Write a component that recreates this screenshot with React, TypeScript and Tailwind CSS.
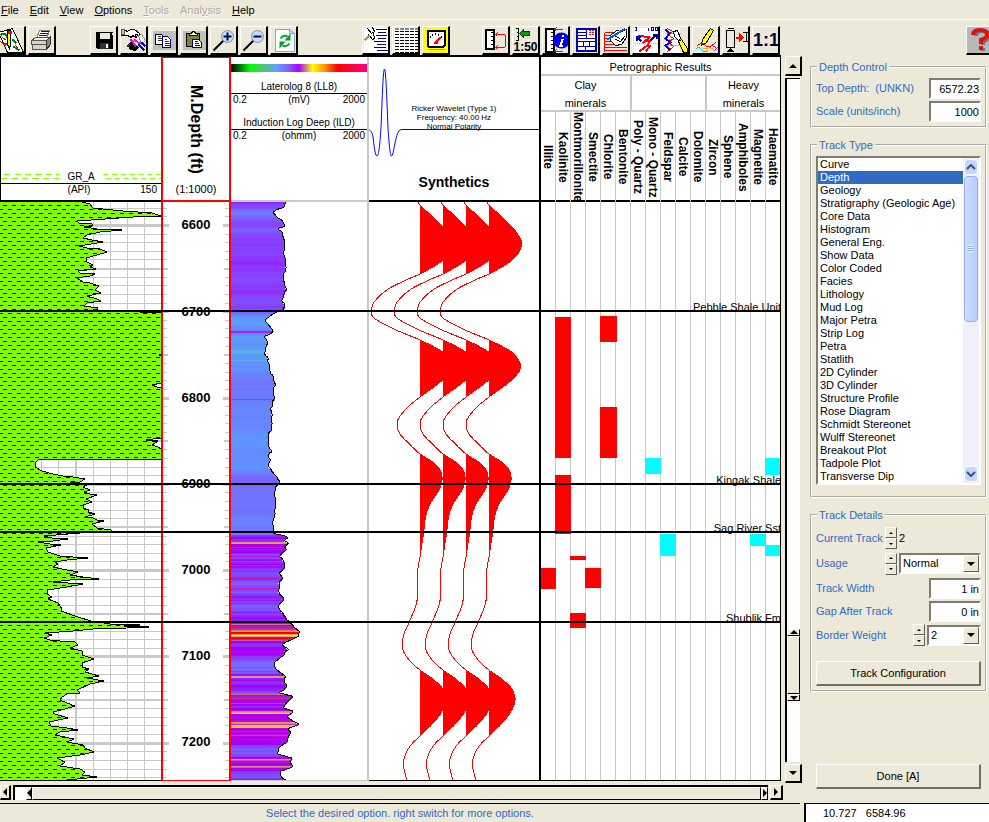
import React from "react";

type Pt = [number, number];

/* ---------- depth axis ---------- */
const TOP = 202;
const SPAN = 579;
const depthToY = (d: number) => 225.4 + (d - 6600) * 0.863;
const toPct = (y: number) => `${((y - TOP) / SPAN) * 100}%`;

const depthLabels = [6600, 6700, 6800, 6900, 7000, 7100, 7200];
const ticks: number[] = [];
for (let d = 6580; d <= 7240; d += 10) ticks.push(d);
const tickWeight = (d: number) => (d % 100 === 0 ? 3 : d % 50 === 0 ? 2 : 1);

const formations = [
  { name: "Pebble Shale Unit", y: 310 },
  { name: "Kingak Shale", y: 483 },
  { name: "Sag River Sst", y: 531 },
  { name: "Shublik Fm", y: 621 },
];

/* ---------- gamma ray ---------- */
const gamma: Pt[] = [
  [82, 202], [90, 204], [93, 208], [123, 211], [152, 213], [161, 216], [133, 217], [105, 219], [77, 221], [79, 223], [92, 224], [92, 226],
  [84, 227], [97, 229], [122, 230], [100, 232], [87, 235], [83, 238], [92, 240], [103, 242], [91, 244], [79, 246], [87, 248], [100, 249],
  [107, 252], [97, 255], [86, 258], [87, 262], [93, 265], [90, 267], [96, 269], [78, 271], [80, 273], [95, 274], [90, 276], [77, 278],
  [83, 282], [90, 283], [99, 286], [95, 290], [101, 293], [87, 296], [97, 299], [101, 301], [87, 303], [84, 306], [98, 308], [97, 310],
  [140, 312], [161, 313], [161, 354], [159, 355], [161, 356], [161, 383], [152, 385], [157, 387], [161, 388], [161, 438], [146, 440],
  [158, 441], [152, 445], [158, 447], [161, 449], [161, 459], [39, 459], [35, 463], [35, 467], [42, 471], [53, 474], [63, 476],
  [73, 477], [85, 479], [80, 482], [70, 483], [87, 485], [83, 487], [90, 490], [84, 492], [90, 494], [97, 495], [86, 499], [92, 502],
  [83, 505], [83, 508], [89, 510], [88, 512], [95, 514], [85, 517], [93, 518], [97, 520], [104, 521], [92, 524], [97, 528], [111, 530],
  [111, 531], [80, 533], [44, 536], [52, 538], [68, 539], [53, 541], [38, 542], [50, 544], [61, 545], [46, 548], [48, 552], [60, 556],
  [73, 557], [88, 558], [67, 560], [55, 562], [58, 564], [53, 567], [62, 569], [78, 572], [70, 575], [83, 577], [99, 579], [70, 580],
  [53, 582], [83, 584], [67, 587], [47, 590], [47, 594], [52, 597], [48, 599], [58, 603], [60, 606], [62, 609], [61, 611], [78, 617],
  [91, 621], [110, 624], [140, 625], [124, 626], [149, 627], [127, 628], [93, 629], [73, 631], [45, 633], [52, 635], [44, 638], [50, 640],
  [60, 641], [75, 642], [78, 645], [70, 648], [82, 651], [82, 655], [94, 659], [82, 663], [82, 667], [89, 669], [85, 672], [99, 676],
  [87, 678], [104, 681], [90, 684], [77, 690], [80, 693], [67, 694], [62, 697], [60, 700], [67, 703], [75, 706], [65, 709], [53, 712],
  [55, 714], [68, 718], [49, 722], [51, 726], [67, 728], [78, 730], [60, 732], [55, 735], [74, 739], [67, 742], [83, 745], [85, 748],
  [94, 752], [80, 755], [57, 758], [65, 762], [60, 766], [80, 769], [85, 772], [82, 775], [97, 777], [67, 780], [67, 781],
];
const gammaLine = gamma.map((p) => p.join(",")).join(" ");

/* ---------- resistivity ---------- */
const resist: Pt[] = [
  [286, 202], [284, 208], [277, 210], [273, 213], [278, 218], [283, 221], [285, 227], [278, 229], [282, 233], [284, 238], [285, 248],
  [284, 254], [286, 262], [285, 271], [283, 278], [284, 285], [286, 291], [282, 301], [285, 307], [284, 310], [278, 312], [270, 316],
  [265, 321], [270, 328], [274, 332], [265, 337], [268, 342], [266, 348], [264, 353], [268, 360], [269, 368], [273, 377], [275, 383],
  [274, 389], [273, 395], [275, 400], [273, 402], [271, 410], [272, 420], [271, 430], [268, 437], [268, 445], [271, 452], [269, 456],
  [270, 460], [268, 467], [272, 472], [277, 477], [279, 483], [275, 490], [275, 513], [272, 523], [274, 530], [273, 534], [283, 536],
  [289, 538], [283, 541], [289, 544], [284, 547], [286, 550], [280, 557], [284, 563], [285, 568], [280, 573], [283, 580], [278, 583],
  [280, 588], [278, 592], [284, 599], [284, 600], [278, 607], [283, 615], [288, 621], [292, 626], [300, 632], [298, 637], [287, 642],
  [282, 645], [288, 650], [282, 657], [274, 663], [276, 670], [286, 677], [284, 682], [287, 687], [283, 691], [278, 693], [293, 697],
  [287, 703], [283, 708], [294, 712], [287, 717], [292, 721], [299, 725], [288, 729], [291, 733], [287, 740], [286, 743], [279, 748],
  [277, 754], [286, 757], [293, 759], [289, 763], [293, 767], [280, 772], [282, 778], [286, 781],
];

const interpolate = (pts: Pt[], y: number) => {
  for (let i = 1; i < pts.length; i++) {
    if (y <= pts[i][1]) {
      const [x0, y0] = pts[i - 1];
      const [x1, y1] = pts[i];
      return y1 === y0 ? x1 : x0 + ((x1 - x0) * (y - y0)) / (y1 - y0);
    }
  }
  return pts[pts.length - 1][0];
};

const ramp: [number, number, number, number][] = [
  [262, 88, 170, 235], [267, 92, 152, 255], [272, 104, 132, 255], [276, 116, 110, 255], [281, 124, 88, 255],
  [285, 138, 60, 255], [289, 160, 0, 255], [294, 184, 0, 224], [300, 190, 40, 190],
];
const rampColour = (v: number) => {
  const x = Math.max(262, Math.min(300, v));
  for (let i = 1; i < ramp.length; i++) {
    if (x <= ramp[i][0]) {
      const a = ramp[i - 1];
      const b = ramp[i];
      const t = (x - a[0]) / (b[0] - a[0]);
      const mix = (k: 1 | 2 | 3) => Math.round(a[k] + (b[k] - a[k]) * t);
      return `rgb(${mix(1)},${mix(2)},${mix(3)})`;
    }
  }
  return "rgb(160,0,255)";
};
const jitter = (y: number) => {
  const s = Math.sin(y * 12.9898) * 43758.5453;
  return (s - Math.floor(s)) * 2 - 1;
};
const stripes: Record<number, string> = {
  331: "#a020ff", 332: "#a020ff", 350: "#5ab0e8", 351: "#5ab0e8", 352: "#5ab0e8", 360: "#5ab0e8", 399: "#9040ff",
  542: "#d8a060", 543: "#d8a060", 546: "#b000d0", 556: "#c010c0", 563: "#c010c0", 578: "#c020b0", 588: "#b820c0",
  624: "#d070a0", 630: "#e08040", 631: "#e0a040", 632: "#ff0000", 633: "#ff0000", 634: "#e8a020", 635: "#ffff20", 636: "#e0a0a0",
  637: "#ff0000", 638: "#ff0000", 640: "#c050b0", 676: "#d8a070", 677: "#d09090", 683: "#c020b0", 694: "#d07090", 698: "#b838b8",
  703: "#c040c0", 711: "#d08080", 712: "#e8a050", 713: "#ffe010", 722: "#d89060", 723: "#e0a040", 725: "#ffe000", 726: "#ffb000",
  727: "#ffe800", 731: "#b830b0", 735: "#c040a0", 759: "#d89090", 760: "#c050c0", 766: "#d09080", 767: "#c060a0", 773: "#b020d0",
  780: "#e8c030",
};
const resistRows = Array.from({ length: SPAN }, (_, i) => {
  const y = TOP + i;
  const x = interpolate(resist, y + 0.5);
  const lower = y > 534;
  const fill = stripes[y] ?? rampColour(x + (lower ? 3 + jitter(y) * 3 : jitter(Math.floor(y / 2)) * 0.8));
  return { y, x, fill };
});

/* ---------- synthetic seismic ---------- */
const wiggle: Pt[] = [
  [-2, 202], [0, 205], [22, 226], [31, 238], [32.5, 244], [29.5, 253], [19, 263], [0, 274], [-11.7, 279], [-31.7, 289], [-45, 301],
  [-48.7, 310], [-47, 317], [-38, 323], [-21.7, 331], [0, 340], [22.7, 352], [30, 361], [31.5, 366], [29, 373], [19, 383], [0, 397],
  [-13, 408], [-21.7, 419], [-22.7, 426], [-20, 434], [-11.7, 443], [0, 454], [12.7, 462], [19.5, 469], [22, 478], [20, 488],
  [15, 496], [9.5, 505], [5.5, 517], [3.5, 533], [1, 550], [0, 557], [-2.5, 572], [-2.7, 597], [-4, 605], [-10.7, 622], [-15.7, 633],
  [-17.7, 645], [-15.7, 653], [-9, 662], [0, 670], [14, 680], [22.7, 689], [26, 699], [22.7, 710], [14, 722], [0, 736], [-9, 745],
  [-14.7, 755], [-16.7, 765], [-15, 773], [-13, 781],
];
const spline = (y: number) => {
  let i = 1;
  while (i < wiggle.length - 1 && y > wiggle[i][1]) i++;
  const p0 = wiggle[Math.max(0, i - 2)];
  const p1 = wiggle[i - 1];
  const p2 = wiggle[i];
  const p3 = wiggle[Math.min(wiggle.length - 1, i + 1)];
  const h = p2[1] - p1[1];
  const t = (y - p1[1]) / h;
  const m1 = ((p2[0] - p0[0]) / (p2[1] - p0[1])) * h;
  const m2 = ((p3[0] - p1[0]) / (p3[1] - p1[1])) * h;
  return (
    (2 * t ** 3 - 3 * t ** 2 + 1) * p1[0] + (t ** 3 - 2 * t ** 2 + t) * m1 + (-2 * t ** 3 + 3 * t ** 2) * p2[0] + (t ** 3 - t ** 2) * m2
  );
};
const wiggleSamples = Array.from({ length: SPAN + 1 }, (_, i) => ({ y: TOP + i, d: spline(TOP + i) }));
const traces = [420, 443, 466, 489].map((base) => ({
  base,
  line: wiggleSamples.map((s) => `${(base + s.d).toFixed(1)},${s.y}`).join(" "),
  fill: `${base},${TOP} ` + wiggleSamples.map((s) => `${(base + Math.max(0, s.d)).toFixed(1)},${s.y}`).join(" ") + ` ${base},${TOP + SPAN}`,
}));

/* ---------- petrography ---------- */
const minerals = [
  "Illite", "Kaolinite", "Montmorillonite", "Smectite", "Chlorite", "Bentonite", "Poly - Quartz", "Mono - Quartz",
  "Feldspar", "Calcite", "Dolomite", "Zircon", "Sphene", "Amphiboles", "Magnetite", "Haematite",
];
const mineralBars = [
  { col: 1, from: 317, to: 458, fill: "#ff0000" },
  { col: 1, from: 475, to: 534, fill: "#ff0000" },
  { col: 4, from: 316, to: 342, fill: "#ff0000" },
  { col: 4, from: 407, to: 458, fill: "#ff0000" },
  { col: 2, from: 556, to: 560, fill: "#ff0000" },
  { col: 2, from: 613, to: 628, fill: "#ff0000" },
  { col: 0, from: 568, to: 589, fill: "#ff0000" },
  { col: 3, from: 568, to: 588, fill: "#ff0000" },
  { col: 7, from: 458, to: 474, fill: "#00ffff" },
  { col: 15, from: 458, to: 475, fill: "#00ffff" },
  { col: 8, from: 534, to: 556, fill: "#00ffff" },
  { col: 14, from: 534, to: 546, fill: "#00ffff" },
  { col: 15, from: 545, to: 556, fill: "#00ffff" },
];

const trackTypes = [
  "Curve", "Depth", "Geology", "Stratigraphy (Geologic Age)", "Core Data", "Histogram", "General Eng.", "Show Data", "Color Coded",
  "Facies", "Lithology", "Mud Log", "Major Petra", "Strip Log", "Petra", "Statlith", "2D Cylinder", "3D Cylinder",
  "Structure Profile", "Rose Diagram", "Schmidt Stereonet", "Wulff Stereonet", "Breakout Plot", "Tadpole Plot", "Transverse Dip",
];

/* ---------- toolbar ---------- */
const icons: Record<string, React.ReactNode> = {
  "Map editor": (
    <>
      <path d="M-1 5 L13 1 L24 25 L8 25Z" fill="#fff" stroke="#000" />
      <path d="M1 8 q4 -4 6 0 t3 5 M4 17 q4 -2 6 2 M14 19 l6 4 M13 12 l4 4" fill="none" stroke="#008000" strokeWidth="2" />
      <path d="M0 13 l7 6 M3 10 l4 3 M16 18 l3 3" stroke="#f00" fill="none" />
      <path d="M8 3 h3 v14 l-1 4 l-2 -4z" fill="#ff0" stroke="#000" />
      <path d="M8 3 h4 v3 h-4z" fill="#f00" />
    </>
  ),
  Print: (
    <>
      <path d="M7 11 L10 3 L20 3 L17 11Z" fill="#fff" stroke="#888" />
      <path d="M11 4 h8 M10 6 h8 M9 8 h8" stroke="#00f" />
      <path d="M2 13 l4 -3 h14 l-3 3z" fill="#f4f2e8" stroke="#555" />
      <path d="M2 13 h15 v4 H2z M3 17 h14 v5 H3z" fill="#d8d4c4" stroke="#555" />
      <path d="M17 13 l4 -4 v8 l-4 5z" fill="#888" stroke="#333" />
    </>
  ),
  Save: (
    <>
      <path d="M4 4 h17 v17 H5 l-1 -1z" fill="#000" />
      <path d="M8 5 h10 v6 H8z" fill="#ece9d8" />
      <path d="M8 15 h9 v6 H8z" fill="#333" />
      <path d="M14 16 h2 v4 h-2z M20 5 h1 v2 h-1z" fill="#fff" />
    </>
  ),
  Pick: (
    <>
      <path d="M0 3 h4 l2 1 l3 -2 h4 l5 4 v2 l-4 -1 l1 3 l-4 -2 l-1 2 l-4 -2 H0z" fill="#fff" stroke="#000" />
      <path d="M0 2 h3 v5 H0z" fill="#c0c0c0" stroke="#555" />
      <path d="M6 18 l4 -5 l7 7 l-3 4 l-6 -2z" fill="#000" />
      <path d="M9 12 l6 7 M13 12 l6 5" stroke="#f0c" strokeWidth="2" />
      <path d="M17 8 l3 -1 l4 6 l-4 4z" fill="#fff" stroke="#888" />
      <path d="M17 17 l6 6 M20 15 l4 4" stroke="#00f" strokeWidth="2" />
      <path d="M5 20 l3 -3" stroke="#f00" />
    </>
  ),
  Copy: (
    <>
      <path d="M1 3 h23 v19 H1z" fill="#c0c0c0" />
      <path d="M4 7 h6 l3 3 v7 H4z" fill="#fff" stroke="#000" />
      <path d="M11 9 h5 l3 3 v8 h-8z" fill="#fff" stroke="#000080" />
      <path d="M6 9 h3 M6 11 h4 M6 13 h4 M13 12 h2 M13 14 h4 M13 16 h5 M13 18 h5" stroke="#333" />
    </>
  ),
  Paste: (
    <>
      <path d="M1 3 h23 v19 H1z" fill="#c0c0c0" />
      <path d="M5 6 h13 v13 H5z" fill="#808040" stroke="#000" />
      <path d="M8 8 v-2 h2 l1 -2 h2 l1 2 h2 v2z" fill="#ffff80" stroke="#000" />
      <path d="M11 12 h6 l3 3 v5 h-9z" fill="#fff" stroke="#000080" />
      <path d="M13 14 h3 M13 16 h4 M13 18 h5" stroke="#000080" />
    </>
  ),
  "Zoom in": (
    <g shapeRendering="auto">
      <path d="M2 23 L12 13" stroke="#000" strokeWidth="2" />
      <circle cx="16" cy="9" r="6" fill="#c4dcf8" stroke="#8090a8" />
      <path d="M12 9 h8 M16 5 v8" stroke="#001040" strokeWidth="2" />
    </g>
  ),
  "Zoom out": (
    <g shapeRendering="auto">
      <path d="M2 23 L12 13" stroke="#000" strokeWidth="2" />
      <circle cx="16" cy="9" r="6" fill="#c4dcf8" stroke="#8090a8" />
      <path d="M12 9 h8" stroke="#001040" strokeWidth="2" />
    </g>
  ),
  Refresh: (
    <g shapeRendering="auto">
      <path d="M4 2 h14 l5 4 v18 H4z" fill="#fff" stroke="#8aa4d0" />
      <path d="M18 2 v4 h5z" fill="#c0d8ff" stroke="#8aa4d0" />
      <path d="M9 11 q3 -4 7 -2" fill="none" stroke="#00a030" strokeWidth="2" />
      <path d="M19 6 v7 h-6z" fill="#00a030" />
      <path d="M18 16 q-3 4 -7 2" fill="none" stroke="#00a030" strokeWidth="2" />
      <path d="M8 21 v-7 h6z" fill="#00a030" />
    </g>
  ),
  "Edit list": (
    <>
      <path d="M0 0 h26 v26 H0z" fill="#fff" />
      <path d="M12 2 h11 M14 5 h8 M12 8 h11 M14 11 h8 M10 14 h12 M13 17 h9 M10 20 h12 M13 23 h11" stroke="#000080" />
      <path d="M4 1 l4 5 l3 -2 l-2 -4 M5 7 l4 5 l2 -1 l-1 -5" fill="#fff" stroke="#000" />
      <path d="M1 13 l5 -5" stroke="#a0a000" strokeWidth="2" />
    </>
  ),
  Table: (
    <>
      <path d="M0 0 h26 v26 H0z" fill="#fff" />
      <path d="M1 1 h24" stroke="#888" strokeWidth="2" strokeDasharray="4 1" />
      <path d="M1 4 h24 M1 7 h24 M1 10 h24 M1 13 h24 M1 16 h24 M1 19 h24 M1 22 h24 M1 25 h24" stroke="#000" strokeDasharray="4 1" />
    </>
  ),
  Gauge: (
    <>
      <path d="M-1 -1 h27 v27 H-1z" fill="#ff0" />
      <path d="M4 3 h17 v15 l-1 1 H5 l-1 -1z" fill="#fff" stroke="#000" strokeWidth="2" />
      <path d="M7 10 v-2 M9 8 v-2 M12 7 v-2 M15 8 v-2 M18 10 v-2" stroke="#000" />
      <path d="M11 16 l6 -6" stroke="#f00" strokeWidth="2" />
      <path d="M10 14 h4 v2 h-4z" fill="#f00" />
      <path d="M5 22 h16" stroke="#a0a000" />
    </>
  ),
  "Depth frame": (
    <>
      <path d="M2 2 h8 v19 H2z" fill="#fff" stroke="#000" strokeWidth="2" />
      <path d="M7 5 h2 M7 9 h2 M7 13 h2 M7 17 h2" stroke="#000" />
      <path d="M12 7 h9 l1 1 v11 l-1 1 H12 M14 5 l-2 2 l2 2 M14 18 l-2 2 l2 2" fill="none" stroke="#f00" />
    </>
  ),
  Scale: (
    <>
      <path d="M2 1 h3 v12 H2 M3 5 h2 M3 9 h2" fill="none" stroke="#000" />
      <path d="M6 6 l4 -4 v2 h6 v4 h-6 v2z" fill="#00a000" stroke="#004000" />
    </>
  ),
  "Track information": (
    <>
      <path d="M2 1 h8 v23 H2z" fill="#fff" stroke="#000" strokeWidth="2" />
      <path d="M7 5 h2 M7 9 h2 M7 13 h2 M7 17 h2 M7 21 h2" stroke="#000" />
      <path d="M11 2 h8 M13 0 l-2 2 l2 2 M11 24 h8 M13 22 l-2 2 l2 2" stroke="#f00" fill="none" />
      <circle cx="18" cy="13" r="8" fill="#0000f0" shapeRendering="auto" />
      <path d="M17 12 h2 l-2 6 h2 M19 7 v2" stroke="#fff" strokeWidth="2" fill="none" />
    </>
  ),
  Layout: (
    <>
      <path d="M3 1 h19 v22 H3z" fill="#fff" stroke="#0000c0" strokeWidth="2" />
      <path d="M3 5 h10 M3 8 h10 M3 11 h19 M3 14 h19 M3 19 h19 M13 1 v10 M10 14 v5 M16 14 v5 M12 19 v4" stroke="#0000c0" />
      <path d="M15 3 h6 M15 5 h6 M15 7 h6" stroke="#f00" strokeDasharray="2 1" />
    </>
  ),
  "Draw lines": (
    <>
      <path d="M1 5 h8 M1 8 h7 M1 11 h8 M1 14 h8 M1 17 h14 M1 20 h22 M1 23 h22 M1 5 v19" stroke="#f00" />
      <path d="M7 8 l6 -5 l5 1 l5 -2 v8 l-5 7 l-6 1 l-5 -5z" fill="#fff" stroke="#000" />
      <path d="M4 12 l18 -11" stroke="#0060d0" strokeWidth="2" />
      <path d="M12 9 l5 2 M12 12 l5 2 l4 -5" stroke="#000" fill="none" />
    </>
  ),
  "Edit curve": (
    <>
      <path d="M0 0 h26 v26 H0z" fill="#fff" />
      <path d="M1 0 h2 v3 h-2 M15 0 v3 M18 0 h2 v3 h-2z M22 0 h2 v3 h-2z" fill="none" stroke="#00f" />
      <path d="M5 8 l11 2 l-5 4 l6 -1 l-3 5 l-8 6 M17 18 l-5 6" stroke="#f00" fill="none" strokeWidth="2" />
      <path d="M8 14 l-5 -5 M3 13 v-4 h4 M17 13 l6 -6 M19 7 h4 v4" stroke="#0000c0" fill="none" strokeWidth="2" />
      <path d="M1 16 h24" stroke="#aaa" strokeDasharray="1 1" />
    </>
  ),
  "Paint curve": (
    <>
      <path d="M1 0 h15 v26 H1z" fill="#fff" />
      <path d="M1 6 h16 M1 12 h16 M1 18 h16" stroke="#bbb" />
      <path d="M4 1 l5 3 l-5 3 l6 4 l-5 4 l5 4 l-6 5" stroke="#f00" fill="none" />
      <path d="M2 2 l4 4 l-4 5 l5 4 l-5 3 l5 5" stroke="#00f" strokeWidth="2" fill="none" />
      <path d="M10 4 l4 -1 l3 8 l-2 2 l-4 -4z" fill="#fff" stroke="#000" />
      <path d="M15 14 l3 -2 l6 9 v4 h-4z" fill="#ff0" stroke="#000" />
    </>
  ),
  Highlight: (
    <>
      <path d="M17 1 l3 2 l-7 12 l-5 3 l1 -6z" fill="#ff0" stroke="#000" />
      <path d="M4 18 q5 -4 8 0 t10 -3" stroke="#f00" fill="none" />
      <path d="M2 22 q3 -4 6 0 t6 1" stroke="#00cccc" fill="none" />
      <path d="M9 21 h5 M16 20 l4 2" stroke="#fa0" />
      <path d="M18 18 l5 2 M20 24 l4 -4" stroke="#c000ff" />
    </>
  ),
  "Shift track": (
    <>
      <path d="M3 3 h8 v17 H3z" fill="#ece9d8" stroke="#000" />
      <path d="M4 1 h6 M7 21 l-3 3 h6z" stroke="#000" />
      <path d="M12 10 h4 M16 7 l3 3 l-3 3z" stroke="#f00" fill="#f00" strokeWidth="2" />
      <path d="M19 5 h6 M19 14 h6 M23 5 v9" stroke="#000" />
    </>
  ),
};

function ToolButton({ label, children }: { label: string; children?: React.ReactNode }) {
  return (
    <button
      type="button"
      aria-label={label}
      className="relative h-[29px] w-7 shrink-0 overflow-hidden border-t border-r-2 border-b-2 border-l border-t-white border-r-black border-b-black border-l-white bg-[#ece9d8]"
    >
      {icons[label] && (
        <svg viewBox="-0.5 -0.5 25 26" className="block size-full" shapeRendering="crispEdges" aria-hidden="true">
          {icons[label]}
        </svg>
      )}
      {children}
    </button>
  );
}

function Toolbar() {
  return (
    <div role="toolbar" aria-label="Main tools" className="flex h-[35px] shrink-0 items-end gap-[2px] overflow-hidden">
      <div className="-ml-0.5 flex gap-[2px]">
        <ToolButton label="Map editor" />
        <ToolButton label="Print" />
      </div>
      <div className="ml-8 flex gap-[2px]">
        {["Save", "Pick", "Copy", "Paste", "Zoom in", "Zoom out", "Refresh"].map((n) => (
          <ToolButton key={n} label={n} />
        ))}
      </div>
      <div className="ml-[62px] flex gap-[2px]">
        {["Edit list", "Table", "Gauge"].map((n) => (
          <ToolButton key={n} label={n} />
        ))}
      </div>
      <div className="ml-[30px] flex gap-[2px]">
        <ToolButton label="Depth frame" />
        <ToolButton label="Scale">
          <span className="absolute inset-x-0 bottom-0 text-center text-[12px] leading-3 font-bold">1:50</span>
        </ToolButton>
        {["Track information", "Layout", "Draw lines", "Edit curve", "Paint curve", "Highlight", "Shift track"].map((n) => (
          <ToolButton key={n} label={n} />
        ))}
        <ToolButton label="Actual size">
          <span className="block text-center text-[18px] leading-6 font-bold text-[#000040]">1:1</span>
        </ToolButton>
      </div>
      <div className="-mr-[5px] ml-auto flex">
        <button
          type="button"
          aria-label="Help"
          className="h-[29px] w-7 border-t border-r-2 border-b-2 border-l border-t-white border-r-black border-b-black border-l-white bg-[#b8b8b8]"
        >
          <svg viewBox="0 0 25 26" className="block size-full" aria-hidden="true">
            <path d="M9 9 Q9 4 15 4 Q22 4 22 9 Q22 12 16 15 V18 M16 21 V24" fill="none" stroke="#707888" strokeWidth="4" />
            <path d="M6 8 Q6 3 13 3 Q20 3 20 8 Q20 11 14 13 V17 M14 19 V23" fill="none" stroke="#e01010" strokeWidth="4" />
          </svg>
        </button>
      </div>
    </div>
  );
}

function MenuBar() {
  const items = [
    { pre: "", key: "F", post: "ile" },
    { pre: "", key: "E", post: "dit" },
    { pre: "", key: "V", post: "iew" },
    { pre: "", key: "O", post: "ptions" },
    { pre: "", key: "T", post: "ools", off: true },
    { pre: "Anal", key: "y", post: "sis", off: true },
    { pre: "", key: "H", post: "elp" },
  ];
  return (
    <nav className="flex h-5 shrink-0 items-center gap-[11px] border-b border-white pl-px">
      {items.map((m) => (
        <button
          key={m.key}
          type="button"
          disabled={m.off}
          className="text-[11px] leading-4 disabled:text-[#aca899] disabled:[text-shadow:1px_1px_0_#fff]"
        >
          {m.pre}
          <u>{m.key}</u>
          {m.post}
        </button>
      ))}
    </nav>
  );
}

/* ---------- tracks ---------- */
const header = "flex h-[145px] shrink-0 flex-col border-b-2";
const chart = "absolute inset-0 block size-full";

function GammaTrack() {
  return (
    <section className="flex min-w-0 flex-col border-r-2 border-[#ff0000]">
      <div className={`${header} justify-end border-l border-black`}>
        <div className="flex items-center gap-2">
          <svg viewBox="0 0 56 6" className="h-[6px] flex-1" preserveAspectRatio="none" shapeRendering="crispEdges" aria-hidden="true">
            <path d="M3 0.5 H56 M0 4.5 H56" stroke="#80ff00" strokeDasharray="6 4" />
          </svg>
          <span className="text-[10px] leading-3">GR_A</span>
          <svg viewBox="0 0 66 6" className="h-[6px] flex-1" preserveAspectRatio="none" shapeRendering="crispEdges" aria-hidden="true">
            <path d="M0 0.5 H66 M3 4.5 H66" stroke="#80ff00" strokeDasharray="6 4" />
          </svg>
        </div>
        <div className="mb-1 grid grid-cols-[1fr_auto_1fr] border-t border-black pr-1 text-[10px] leading-3">
          <span />
          <span>(API)</span>
          <span className="text-right">150</span>
        </div>
      </div>
      <div className="relative flex-1 border-b border-black">
        <svg viewBox="0 202 161 578" className={chart} preserveAspectRatio="none" shapeRendering="crispEdges" aria-label="Gamma ray curve">
          <defs>
            <pattern id="shale" x="0" y="205" width="9" height="8" patternUnits="userSpaceOnUse">
              <rect width="9" height="8" fill="#80ff00" />
              <rect x="3" y="0" width="4" height="1" fill="#000" />
              <rect x="0" y="4" width="3" height="1" fill="#000" />
              <rect x="8" y="4" width="1" height="1" fill="#000" />
            </pattern>
          </defs>
          {[24, 41, 58, 93, 110, 127, 144].map((x) => (
            <rect key={x} x={x} y="202" width="1" height="579" fill="#c8c8c8" />
          ))}
          <rect x="75" y="202" width="2" height="579" fill="#c8c8c8" />
          {ticks.map((d) => (
            <rect key={d} x="0" width="161" y={Math.round(depthToY(d) - tickWeight(d) / 2)} height={tickWeight(d)} fill="#c8c8c8" />
          ))}
          <polygon points={`0,202 ${gammaLine} 0,781`} fill="url(#shale)" />
          <polyline points={gammaLine} fill="none" stroke="#000" />
        </svg>
      </div>
    </section>
  );
}

function DepthTrack() {
  return (
    <section className="flex min-w-0 flex-col border-r-2 border-[#ff0000]">
      <div className={`${header} items-center justify-between border-t border-[#ff0000] pt-[27px] pb-[5px]`}>
        <span className="text-[16px] leading-5 font-bold whitespace-nowrap [writing-mode:vertical-rl]">M.Depth (ft)</span>
        <span className="text-[11px] leading-3">(1:1000)</span>
      </div>
      <div className="relative flex-1 border-b border-[#ff0000]">
        <svg viewBox="163 202 66 578" className={chart} preserveAspectRatio="none" shapeRendering="crispEdges" aria-hidden="true">
          {ticks.map((d) => {
            const w = tickWeight(d);
            const len = w + 3;
            const y = Math.round(depthToY(d) - w / 2);
            return (
              <g key={d} fill="#c8c8c8">
                <rect x="163" y={y} width={len} height={w} />
                <rect x={229 - len} y={y} width={len} height={w} />
              </g>
            );
          })}
        </svg>
        {depthLabels.map((d) => (
          <span
            key={d}
            className="absolute inset-x-0 -translate-y-1/2 text-center text-[13px] leading-4 font-bold"
            style={{ top: toPct(depthToY(d)) }}
          >
            {d}
          </span>
        ))}
      </div>
    </section>
  );
}

function CurveScale({ name, unit }: { name: string; unit: string }) {
  return (
    <div className="text-[10px] leading-3">
      <div className="border-b border-black text-center leading-[13px]">{name}</div>
      <div className="grid grid-cols-3 px-0.5">
        <span>0.2</span>
        <span className="text-center">{unit}</span>
        <span className="text-right">2000</span>
      </div>
    </div>
  );
}

function ResistivityTrack() {
  return (
    <section className="flex min-w-0 flex-col border-r-2 border-[#c8c8c8]">
      <div className={`${header} gap-[10px] border-[#c8c8c8] pt-[7px]`}>
        <div className="-mb-[2px] h-2 bg-[linear-gradient(90deg,#000_0%,#00ff00_14%,#50c080_25%,#60a0ff_34%,#8060ff_42%,#b000ff_50%,#d08080_55%,#ffff00_60%,#ffa000_68%,#ff0000_78%,#ff0080_100%)]" />
        <CurveScale name="Laterolog 8 (LL8)" unit="(mV)" />
        <CurveScale name="Induction Log Deep (ILD)" unit="(ohmm)" />
      </div>
      <div className="relative flex-1 border-b border-[#c8c8c8]">
        <svg viewBox="231 202 136 578" className={chart} preserveAspectRatio="none" shapeRendering="crispEdges" aria-label="Resistivity curve">
          {resistRows.map((r) => (
            <rect key={r.y} x="231" y={r.y} width={r.x - 231} height="1" fill={r.fill} />
          ))}
          <polyline points={resistRows.map((r) => `${(r.x + jitter(Math.floor(r.y / 3)) * 0.8).toFixed(1)},${r.y}`).join(" ")} fill="none" stroke="#000" />
        </svg>
      </div>
    </section>
  );
}

function SyntheticsTrack() {
  return (
    <section className="flex min-w-0 flex-col border-r-2 border-black">
      <div className={`${header} relative items-center justify-end border-black pb-[10px]`}>
        <svg viewBox="369 57 170 143" className={chart} preserveAspectRatio="none" aria-label="Ricker wavelet">
          <path
            d="M369 129.5 C371 131 372 132 373 137 C374 145 375 156 377 156 C379 156 380 142 381 128 C382 105 383 69 384.500 69 C386 69 387 105 388 128 C389 142 390 156 391.500 156 C394 156 395 133 400 130 L402 129.500 H539"
            fill="none"
            stroke="#0000ff"
          />
        </svg>
        <p className="relative text-center text-[8px] leading-[9px]">
          Ricker Wavelet (Type 1)
          <br />
          Frequency: 40.00 Hz
          <br />
          Normal Polarity
        </p>
        <h2 className="relative mt-[43px] text-[14px] leading-4 font-bold">Synthetics</h2>
      </div>
      <div className="relative flex-1 border-b border-black">
        <svg viewBox="369 202 170 578" className={chart} preserveAspectRatio="none" shapeRendering="crispEdges" aria-label="Synthetic seismic traces">
          {traces.map((t) => (
            <g key={t.base}>
              <polygon points={t.fill} fill="#ff0000" />
              <polyline points={t.line} fill="none" stroke="#ff0000" />
            </g>
          ))}
        </svg>
      </div>
    </section>
  );
}

function PetrographicTrack() {
  return (
    <section className="flex min-w-0 flex-col border-r border-black">
      <div className={`${header} border-black`}>
        <div className="h-[19px] border-b-2 border-[#c8c8c8] pt-[3px] text-center text-[11px] leading-[14px]">Petrographic Results</div>
        <div className="grid h-9 grid-cols-[91fr_75fr_73fr] border-b-2 border-[#c8c8c8] text-center text-[11px] leading-[18px]">
          <div className="border-r-2 border-[#c8c8c8]">
            Clay
            <br />
            minerals
          </div>
          <div className="border-r-2 border-[#c8c8c8]" />
          <div>
            Heavy
            <br />
            minerals
          </div>
        </div>
        <div className="grid flex-1 grid-cols-[repeat(15,15fr)_14fr]">
          {minerals.map((m) => (
            <div key={m} className="flex min-w-0 items-center justify-center border-r border-[#c8c8c8] last:border-r-0">
              <span className="text-[12px] leading-[14px] font-bold whitespace-nowrap [writing-mode:vertical-rl]">{m}</span>
            </div>
          ))}
        </div>
      </div>
      <div className="relative flex-1 border-b border-black">
        <svg viewBox="541 202 239 578" className={chart} preserveAspectRatio="none" shapeRendering="crispEdges" aria-label="Mineral occurrence">
          {minerals.slice(1).map((m, i) => (
            <rect key={m} x={555 + i * 15} y="202" width="1" height="579" fill="#c8c8c8" />
          ))}
          {mineralBars.map((b) => (
            <rect key={`${b.col}-${b.from}`} x={540 + b.col * 15} y={b.from} width={b.col === 4 ? 17 : 16} height={b.to - b.from} fill={b.fill} />
          ))}
        </svg>
      </div>
    </section>
  );
}

function LogPlot() {
  return (
    <main className="relative grid min-h-0 flex-1 grid-cols-[163fr_68fr_138fr_172fr_240fr] border-t-2 border-black bg-white">
      <GammaTrack />
      <DepthTrack />
      <ResistivityTrack />
      <SyntheticsTrack />
      <PetrographicTrack />
      <div className="pointer-events-none absolute inset-x-0 top-[145px] bottom-0">
        {formations.map((f) => (
          <div key={f.name} className="absolute inset-x-0 h-0.5 bg-black" style={{ top: toPct(f.y) }}>
            <span className="absolute right-0 bottom-0 text-[11px] leading-[9px]">{f.name}</span>
          </div>
        ))}
      </div>
    </main>
  );
}

/* ---------- scroll bars ---------- */
const raised = "border border-t-white border-l-white border-r-[#605e54] border-b-[#605e54] bg-[#ece9d8]";
const hardRaised = "border border-r-2 border-b-2 border-t-white border-l-white border-r-black border-b-black bg-[#ece9d8]";
const grip = "border border-t-white border-l-white border-r-black border-b-black bg-[#ece9d8]";

function Arrow({ dir, className }: { dir: "up" | "down" | "left" | "right"; className: string }) {
  const d = { up: "M0 4 L4 0 L8 4Z", down: "M0 0 L4 4 L8 0Z", left: "M4 0 L0 4 L4 8Z", right: "M0 0 L4 4 L0 8Z" }[dir];
  const box = dir === "up" || dir === "down" ? "0 0 8 4" : "0 0 4 8";
  return (
    <svg viewBox={box} className={className} aria-hidden="true">
      <path d={d} fill="#000" />
    </svg>
  );
}

function VerticalScroll() {
  return (
    <div className="flex w-[22px] shrink-0 flex-col gap-0.5 pt-px pr-px pb-5 pl-1">
      <button type="button" aria-label="Scroll up" className={`flex h-5 shrink-0 items-center justify-center ${hardRaised}`}>
        <Arrow dir="up" className="h-1 w-2" />
      </button>
      <div className="mr-0.5 flex flex-1 flex-col border-t border-l-2 border-t-black border-l-black bg-white">
        <div className="flex-[553]" />
        <div className={`flex h-[7px] items-center justify-center ${grip}`}>
          <Arrow dir="up" className="h-1 w-2" />
        </div>
        <div className={`flex-[57] ${grip}`} />
        <div className={`flex h-[7px] items-center justify-center ${grip}`}>
          <Arrow dir="down" className="h-1 w-2" />
        </div>
        <div className="flex-[61]" />
      </div>
      <button type="button" aria-label="Scroll down" className={`flex h-[19px] shrink-0 items-center justify-center ${hardRaised}`}>
        <Arrow dir="down" className="h-1 w-2" />
      </button>
    </div>
  );
}

function HorizontalScroll() {
  return (
    <div className="flex h-[22px] shrink-0 items-center gap-0.5">
      <button type="button" aria-label="Scroll left" className={`flex h-[15px] w-[11px] items-center justify-center ${hardRaised}`}>
        <Arrow dir="left" className="h-2 w-1" />
      </button>
      <div className="flex h-[15px] flex-1 border-t-2 border-l-2 border-black bg-white">
        <div className="w-[11px]" />
        <div className={`flex w-[6px] items-center justify-center ${grip}`}>
          <Arrow dir="left" className="h-2 w-1" />
        </div>
        <div className={`flex-1 ${grip}`} />
        <div className={`flex w-[7px] items-center justify-center ${grip}`}>
          <Arrow dir="right" className="h-2 w-1" />
        </div>
      </div>
      <button type="button" aria-label="Scroll right" className={`-mr-0.5 flex h-[15px] w-[13px] items-center justify-center ${hardRaised}`}>
        <Arrow dir="right" className="h-2 w-1" />
      </button>
    </div>
  );
}

/* ---------- side panel ---------- */
const sunken = "border-2 border-t-[#7f7c6f] border-l-[#7f7c6f] border-r-white border-b-white bg-white";
const groupBox = "border-2 border-white [border-style:groove] px-1";
const legend = "ml-px px-0.5 text-[11px] leading-[14px] text-[#316ac5]";

function NumberField({ id, label, value }: { id: string; label: string; value: string }) {
  return (
    <div className="flex h-[23px] items-center">
      <label htmlFor={id} className="flex-1 whitespace-pre text-[#316ac5]">
        {label}
      </label>
      <input id={id} defaultValue={value} className={`h-[21px] w-[52px] text-right ${sunken}`} />
    </div>
  );
}

function Spinner({ name }: { name: string }) {
  return (
    <span className="flex w-3 flex-col">
      <button type="button" aria-label={`${name} up`} className={`flex h-[11px] items-center justify-center ${raised}`}>
        <Arrow dir="up" className="h-0.5 w-1" />
      </button>
      <button type="button" aria-label={`${name} down`} className={`flex h-[11px] items-center justify-center ${raised}`}>
        <Arrow dir="down" className="h-0.5 w-1" />
      </button>
    </span>
  );
}

function DropDown({ id, options, className }: { id: string; options: string[]; className: string }) {
  return (
    <span className={`ml-0.5 flex h-[21px] ${className} ${sunken}`}>
      <select id={id} className="min-w-0 flex-1 appearance-none bg-white pl-0.5">
        {options.map((o) => (
          <option key={o}>{o}</option>
        ))}
      </select>
      <span className={`pointer-events-none flex w-4 items-center justify-center ${raised}`}>
        <Arrow dir="down" className="h-1 w-2" />
      </span>
    </span>
  );
}

function ListScroll() {
  const button = "flex h-4 shrink-0 items-center justify-center rounded-sm border border-white bg-[#c4d5fc]";
  return (
    <div className="flex w-4 shrink-0 flex-col gap-px bg-[#f1f0fa] p-px">
      <button type="button" aria-label="Scroll list up" className={button}>
        <svg viewBox="0 0 10 6" className="h-1.5 w-2.5" aria-hidden="true">
          <path d="M1 5 L5 1 L9 5" fill="none" stroke="#3c5078" strokeWidth="2" />
        </svg>
      </button>
      <div className="flex flex-[146] items-center justify-center rounded-sm border border-[#98b0e8] bg-[linear-gradient(90deg,#cfdcff,#b8ccfa)]">
        <span className="h-[7px] w-1.5 bg-[repeating-linear-gradient(#eef4ff_0_1px,#8cb0f8_1px_2px)]" />
      </div>
      <div className="flex-[144]" />
      <button type="button" aria-label="Scroll list down" className={button}>
        <svg viewBox="0 0 10 6" className="h-1.5 w-2.5" aria-hidden="true">
          <path d="M1 1 L5 5 L9 1" fill="none" stroke="#3c5078" strokeWidth="2" />
        </svg>
      </button>
    </div>
  );
}

function SidePanel() {
  const wideButton =
    "block w-full border border-r-2 border-b-2 border-t-white border-l-white border-r-[#716f64] border-b-[#716f64] h-[25px] text-center";
  return (
    <aside className="flex w-[186px] shrink-0 flex-col pr-0.5 pb-[14px] pl-[7px] text-[11px] leading-[13px]">
      <fieldset className={`${groupBox} mt-[5px] pb-[3px]`}>
        <legend className={legend}>Depth Control</legend>
        <div className="pt-[3px]">
          <NumberField id="top-depth" label={"Top Depth:  (UNKN)"} value="6572.23" />
          <NumberField id="scale" label="Scale (units/inch)" value="1000" />
        </div>
      </fieldset>

      <fieldset className={`${groupBox} mt-[10px] pb-[11px]`}>
        <legend className={legend}>
          <label htmlFor="track-type">Track Type</label>
        </legend>
        <div className={`mt-1 flex h-[329px] ${sunken}`}>
          <select
            id="track-type"
            size={25}
            defaultValue="Depth"
            className="h-[325px] min-w-0 flex-1 appearance-none overflow-hidden bg-white [scrollbar-width:none]"
          >
            {trackTypes.map((t) => (
              <option
                key={t}
                className="h-[13px] min-h-0 p-0 pl-0.5 text-[11px] leading-[13px] checked:bg-[linear-gradient(#316ac5,#316ac5)] checked:text-white"
              >
                {t}
              </option>
            ))}
          </select>
          <ListScroll />
        </div>
      </fieldset>

      <fieldset className={`${groupBox} mt-[10px] pb-1`}>
        <legend className={legend}>Track Details</legend>
        <div className="pt-1">
          <div className="flex h-6 items-center text-[#316ac5]">
            <span className="w-[69px]">Current Track</span>
            <Spinner name="Current track" />
            <output className="ml-0.5 text-black">2</output>
          </div>
          <div className="flex h-[27px] items-center">
            <label htmlFor="usage" className="w-[69px] text-[#316ac5]">
              Usage
            </label>
            <Spinner name="Usage" />
            <DropDown id="usage" options={["Normal", "Hidden"]} className="flex-1" />
          </div>
          <NumberField id="track-width" label="Track Width" value="1 in" />
          <NumberField id="gap-after" label="Gap After Track" value="0 in" />
          <div className="flex h-6 items-center">
            <label htmlFor="border-weight" className="flex-1 text-[#316ac5]">
              Border Weight
            </label>
            <Spinner name="Border weight" />
            <DropDown id="border-weight" options={["2", "1", "3"]} className="w-[54px]" />
          </div>
          <button type="button" className={`mt-[14px] ${wideButton}`}>
            Track Configuration
          </button>
        </div>
      </fieldset>

      <div className="mt-auto px-1.5">
        <button type="button" className={wideButton}>
          Done [A]
        </button>
      </div>
    </aside>
  );
}

export default function App() {
  return (
    <div className="flex h-screen flex-col overflow-hidden bg-[#ece9d8] font-['Liberation_Sans',Arial,sans-serif] text-black">
      <MenuBar />
      <Toolbar />
      <div className="flex min-h-0 flex-1">
        <div className="flex min-w-0 flex-1 flex-col">
          <LogPlot />
          <HorizontalScroll />
        </div>
        <VerticalScroll />
        <SidePanel />
      </div>
      <footer className="flex h-[19px] shrink-0 gap-1 text-[11px] leading-[18px]">
        <p className="flex-1 border-t border-black text-center text-[#316ac5]">Select the desired option. right switch for more options.</p>
        <output className="w-[185px] border-t border-l-2 border-black bg-white pl-[17px] whitespace-pre">{"10.727   6584.96"}</output>
      </footer>
    </div>
  );
}
